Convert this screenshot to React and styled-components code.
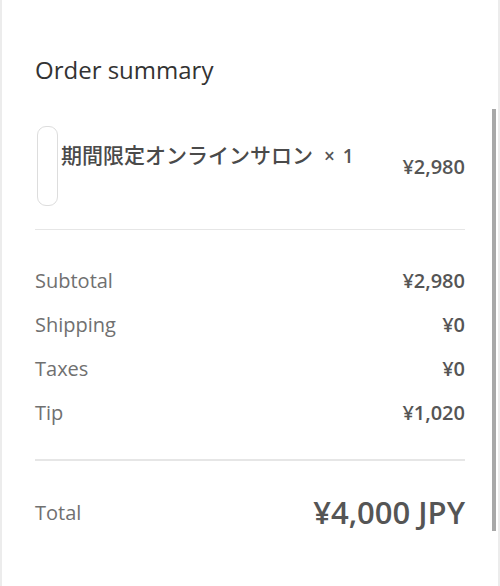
import React from "react";
import styled, { createGlobalStyle } from "styled-components";

const GlobalStyle = createGlobalStyle`
  html, body {
    margin: 0;
    padding: 0;
    background: #ffffff;
  }

  body {
    font-family: "Open Sans", "Noto Sans", "Noto Sans CJK JP", sans-serif;
  }
`;

const lines = [
  { label: "Subtotal", value: "¥2,980" },
  { label: "Shipping", value: "¥0" },
  { label: "Taxes", value: "¥0" },
  { label: "Tip", value: "¥1,020" },
];

const App = () => {
  return (
    <Page>
      <GlobalStyle />
      <Panel>
        <Title>Order summary</Title>
        <ProductRow>
          <Thumb />
          <ProductName>
            期間限定オンラインサロン<Qty>× 1</Qty>
          </ProductName>
          <ProductPrice>¥2,980</ProductPrice>
        </ProductRow>
        <Divider />
        <Lines>
          {lines.map(line => (
            <Line key={line.label}>
              <Label>{line.label}</Label>
              <Value>{line.value}</Value>
            </Line>
          ))}
        </Lines>
        <Divider thick />
        <TotalRow>
          <Label>Total</Label>
          <TotalValue>¥4,000 JPY</TotalValue>
        </TotalRow>
      </Panel>
      <ScrollTrack>
        <ScrollThumb />
      </ScrollTrack>
    </Page>
  );
};

const Page = styled.div`
  display: flex;
  width: 500px;
  height: 586px;
  box-sizing: border-box;
  border-left: 2px solid #ececec;
  border-right: 2px solid #ececec;
  background: #ffffff;
  overflow: hidden;
`;

const Panel = styled.div`
  flex: 1;
  display: flex;
  flex-direction: column;
  padding: 54px 25px 0 33px;
`;

const Title = styled.h2`
  margin: 0;
  font-size: 24px;
  font-weight: 400;
  line-height: 32px;
  color: #333333;
`;

const ProductRow = styled.div`
  display: flex;
  align-items: flex-start;
  margin-top: 40px;
`;

const Thumb = styled.div`
  width: 21px;
  height: 80px;
  box-sizing: border-box;
  border: 1.5px solid #dddddd;
  border-radius: 9px;
  margin-left: 2px;
  flex-shrink: 0;
`;

const ProductName = styled.div`
  flex: 1;
  margin-left: 3px;
  margin-top: 16px;
  font-family: "Noto Sans CJK JP", "Open Sans", sans-serif;
  font-size: 21px;
  font-weight: 500;
  line-height: 24px;
  color: #4a4a4a;
`;

const Qty = styled.span`
  margin-left: 11px;
  font-family: "Open Sans", sans-serif;
  font-size: 19px;
  font-weight: 600;
  word-spacing: 3px;
  color: #555555;
`;

const ProductPrice = styled.div`
  margin-top: 29px;
  font-size: 20px;
  font-weight: 600;
  line-height: 24px;
  color: #555555;
`;

const Divider = styled.div`
  height: ${({ thick }) => (thick ? "2px" : "1px")};
  background: #e6e6e6;
  margin-top: ${({ thick }) => (thick ? "35px" : "23px")};
`;

const Lines = styled.div`
  display: flex;
  flex-direction: column;
  gap: 20px;
  margin-top: 38px;
`;

const Line = styled.div`
  display: flex;
  justify-content: space-between;
  align-items: center;
  height: 24px;
`;

const Label = styled.span`
  font-size: 20px;
  font-weight: 400;
  color: #707070;
`;

const Value = styled.span`
  font-size: 20px;
  font-weight: 600;
  color: #555555;
`;

const TotalRow = styled.div`
  display: flex;
  justify-content: space-between;
  align-items: center;
  margin-top: 30px;
`;

const TotalValue = styled.span`
  font-size: 31px;
  font-weight: 600;
  color: #555555;
`;

const ScrollTrack = styled.div`
  width: 8px;
  display: flex;
  flex-direction: column;
`;

const ScrollThumb = styled.div`
  width: 4px;
  height: 422px;
  margin-top: 109px;
  margin-left: 2px;
  background: #a8a8a8;
`;

export default App;
